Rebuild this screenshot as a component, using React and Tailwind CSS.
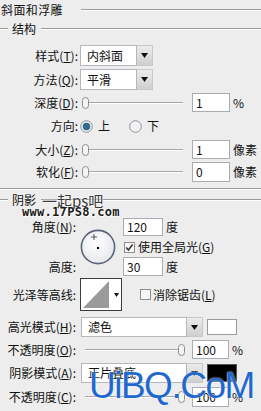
import React from "react";

const font = { fontFamily: '"Noto Sans CJK SC", "Liberation Sans", sans-serif' };

const Label = ({ text, k, w = "w-[78px]" }) => {
  // text like "样式" and mnemonic letter k
  return (
    <div className={`${w} shrink-0 text-right text-[12px] leading-none text-[#111]`}>
      {text}
      {k && (
        <>
          (<span className="underline underline-offset-1">{k}</span>)
        </>
      )}
      :
    </div>
  );
};

const Select = ({ value, w, h }) => (
  <div className={`flex ${h}`}>
    <div className={`${w} bg-white border border-[#b4b8bd] flex items-center pl-[6px] text-[12px] leading-none`}>
      {value}
    </div>
    <div className="w-[16px] border border-l-0 border-[#c8c8c8] bg-gradient-to-b from-[#ececec] to-[#cfcfcf] flex items-center justify-center">
      <svg width="7" height="5" viewBox="0 0 7 5">
        <path d="M0 0 L7 0 L3.5 5 Z" fill="#111" />
      </svg>
    </div>
  </div>
);

const Input = ({ value, w = "w-[38px]", h = "h-[19px]" }) => (
  <div className={`${w} ${h} bg-white border border-[#a9adb3] flex items-center pl-[3px] text-[12px] leading-none`}>
    {value}
  </div>
);

const Thumb = () => (
  <svg width="7" height="12" viewBox="0 0 7 12" className="shrink-0">
    <rect x="0.5" y="0.5" width="6" height="11" rx="3" fill="#f4f4f4" stroke="#8d8d8d" />
  </svg>
);

const Slider = ({ w, atEnd }) => (
  <div className={`${w} flex items-center`}>
    {atEnd ? (
      <>
        <div className="flex-1 border-t border-[#a6a6a6] border-b border-b-white" />
        <Thumb />
      </>
    ) : (
      <>
        <Thumb />
        <div className="flex-1 border-t border-[#a6a6a6] border-b border-b-white" />
      </>
    )}
  </div>
);

const Etched = ({ className = "" }) => (
  <div className={`border-t border-[#9a9a9a] border-b border-b-white ${className}`} />
);

const Radio = ({ checked }) => (
  <svg width="13" height="13" viewBox="0 0 13 13">
    <circle cx="6.5" cy="6.5" r="5.8" fill={checked ? "#e8eef2" : "#f2f2f2"} stroke="#8c949c" strokeWidth="1" />
    {checked && <circle cx="6.5" cy="6.5" r="3.4" fill="#2f6f8e" stroke="#1c4e66" strokeWidth="0.6" />}
  </svg>
);

const Checkbox = ({ checked }) => (
  <svg width="11" height="11" viewBox="0 0 11 11">
    <rect x="0.5" y="0.5" width="10" height="10" fill="#f6f6f6" stroke="#8e8e8e" />
    {checked && <path d="M2.3 5.5 L4.4 8 L8.6 2.5" fill="none" stroke="#333" strokeWidth="1.5" />}
  </svg>
);

export default function App() {
  return (
    <div style={font} className="relative w-[261px] h-[411px] overflow-hidden bg-[#ededed] text-[#111]">
      {/* 斜面和浮雕 */}
      <div className="flex items-center h-[20px]">
        <span className="text-[12px] leading-none pl-[1px] tracking-[0.4px]">斜面和浮雕</span>
        <Etched className="flex-1 ml-[18px]" />
      </div>

      {/* 结构 */}
      <div className="flex items-center h-[18px]">
        <Etched className="w-[8px]" />
        <span className="text-[12px] leading-none px-[4px]">结构</span>
        <Etched className="flex-1 ml-[1px]" />
      </div>

      <div className="flex items-center h-[21px] mt-[7px] gap-[2px]">
        <Label text="样式" k="T" />
        <Select value="内斜面" w="w-[57px]" h="h-[21px]" />
      </div>
      <div className="flex items-center h-[21px] mt-[3px] gap-[2px]">
        <Label text="方法" k="Q" />
        <Select value="平滑" w="w-[57px]" h="h-[21px]" />
      </div>
      <div className="flex items-center h-[19px] mt-[3px] gap-[4px]">
        <Label text="深度" k="D" />
        <Slider w="w-[101px]" />
        <div className="ml-[5px]">
          <Input value="1" />
        </div>
        <span className="text-[12px] leading-none ml-[-1px]">%</span>
      </div>
      <div className="flex items-center h-[16px] mt-[6px] gap-[2px]">
        <Label text="方向" />
        <Radio checked />
        <span className="text-[12px] leading-none ml-[3px]">上</span>
        <div className="ml-[17px]">
          <Radio />
        </div>
        <span className="text-[12px] leading-none ml-[3px]">下</span>
      </div>
      <div className="flex items-center h-[19px] mt-[6px] gap-[4px]">
        <Label text="大小" k="Z" />
        <Slider w="w-[101px]" />
        <div className="ml-[5px]">
          <Input value="1" />
        </div>
        <span className="text-[12px] leading-none ml-[-1px]">像素</span>
      </div>
      <div className="flex items-center h-[20px] mt-[3px] gap-[4px]">
        <Label text="软化" k="F" />
        <Slider w="w-[101px]" />
        <div className="ml-[5px]">
          <Input value="0" h="h-[20px]" />
        </div>
        <span className="text-[12px] leading-none ml-[-1px]">像素</span>
      </div>

      <Etched className="mt-[6px]" />

      {/* 阴影 */}
      <div className="flex items-center h-[16px] mt-[2px]">
        <Etched className="w-[8px]" />
        <span className="text-[12px] leading-none px-[4px]">阴影</span>
        <Etched className="flex-1 ml-[1px]" />
      </div>

      <div className="flex h-[58px] mt-[10px]">
        <div className="w-[76px] flex flex-col justify-between">
          <div className="h-[18px] flex items-center justify-end">
            <Label text="角度" k="N" w="w-[76px]" />
          </div>
          <div className="h-[19px] flex items-center justify-end">
            <Label text="高度" w="w-[74px]" />
          </div>
        </div>
        <div className="w-[47px] pl-[4px] pt-[11px]">
          <svg width="36" height="36" viewBox="0 0 36 36">
            <defs>
              <radialGradient id="dial" cx="0.45" cy="0.4" r="0.7">
                <stop offset="0" stopColor="#ffffff" />
                <stop offset="1" stopColor="#e2e4e8" />
              </radialGradient>
            </defs>
            <circle cx="18" cy="18" r="16.6" fill="url(#dial)" stroke="#59647a" strokeWidth="1.6" />
            <path d="M14 5 V11 M11 8 H17" stroke="#333" strokeWidth="0.8" />
            <rect x="17" y="18" width="2" height="2" fill="#000" />
          </svg>
        </div>
        <div className="flex flex-col">
          <div className="flex items-center gap-[3px]">
            <Input value="120" w="w-[40px]" h="h-[18px]" />
            <span className="text-[12px] leading-none">度</span>
          </div>
          <div className="flex items-center h-[21px] gap-[3px] pl-[1px] mt-[1px]">
            <Checkbox checked />
            <span className="text-[12px] leading-none">
              使用全局光(<span className="underline underline-offset-1">G</span>)
            </span>
          </div>
          <div className="flex items-center gap-[3px]">
            <Input value="30" w="w-[40px]" h="h-[19px]" />
            <span className="text-[12px] leading-none">度</span>
          </div>
        </div>
      </div>

      {/* 光泽等高线 */}
      <div className="flex items-center h-[33px] mt-[2px] gap-[4px]">
        <Label text="光泽等高线" w="w-[76px]" />
        <div className="w-[42px] h-[33px] border border-[#3c3c3c] bg-white flex">
          <svg width="30" height="31" viewBox="0 0 30 31">
            <path d="M2 29 L28 2 L28 29 Z" fill="#9a9a9a" />
          </svg>
          <div className="flex-1 flex items-center justify-center">
            <svg width="5" height="4" viewBox="0 0 5 4">
              <path d="M0 0 L5 0 L2.5 4 Z" fill="#111" />
            </svg>
          </div>
        </div>
        <div className="ml-[14px] flex items-center gap-[2px]">
          <Checkbox />
          <span className="text-[12px] leading-none">
            消除锯齿(<span className="underline underline-offset-1">L</span>)
          </span>
        </div>
      </div>

      <div className="flex items-center h-[20px] mt-[6px] gap-[5px]">
        <Label text="高光模式" k="H" w="w-[76px]" />
        <Select value="滤色" w="w-[106px]" h="h-[20px]" />
        <div className="w-[30px] h-[16px] bg-white border border-[#9a9a9a] ml-[-1px]" />
      </div>
      <div className="flex items-center h-[19px] mt-[3px]">
        <Label text="不透明度" k="O" w="w-[76px]" />
        <div className="ml-[9px]">
          <Slider w="w-[100px]" atEnd />
        </div>
        <div className="ml-[7px]">
          <Input value="100" w="w-[37px]" />
        </div>
        <span className="text-[12px] leading-none ml-[3px]">%</span>
      </div>
      <div className="flex items-center h-[20px] mt-[4px] gap-[5px]">
        <Label text="阴影模式" k="A" w="w-[76px]" />
        <Select value="正片叠底" w="w-[106px]" h="h-[20px]" />
        <div className="w-[30px] h-[18px] bg-black border border-[#555] ml-[-1px]" />
      </div>
      <div className="flex items-center h-[20px] mt-[4px]">
        <Label text="不透明度" k="C" w="w-[76px]" />
        <div className="ml-[9px]">
          <Slider w="w-[100px]" atEnd />
        </div>
        <div className="ml-[7px]">
          <Input value="100" w="w-[37px]" h="h-[20px]" />
        </div>
        <span className="text-[12px] leading-none ml-[3px]">%</span>
      </div>

      {/* watermarks */}
      <div
        className="absolute left-[42px] top-[193px] text-[15px] leading-none text-[#3a3a3a]"
        style={{ textShadow: "0 0 2px #fff, 0 0 2px #fff" }}
      >
        一起ps吧
      </div>
      <div
        className="absolute left-[22px] top-[206px] text-[12px] leading-none font-bold tracking-[0.3px] text-[#1b1b1b]"
        style={{ fontFamily: '"DejaVu Sans Mono", monospace', textShadow: "1px 1px 0 #fff, -1px 0 0 #fff" }}
      >
        www.17PS8.com
      </div>
      <div
        className="absolute left-[89px] top-[367px] text-[37px] leading-none tracking-[-1.5px] text-[#1f68cf]"
        style={{ fontFamily: '"Liberation Sans", sans-serif', textShadow: "0 0 2px #fff" }}
      >
        UiBQ.CoM
      </div>
    </div>
  );
}
